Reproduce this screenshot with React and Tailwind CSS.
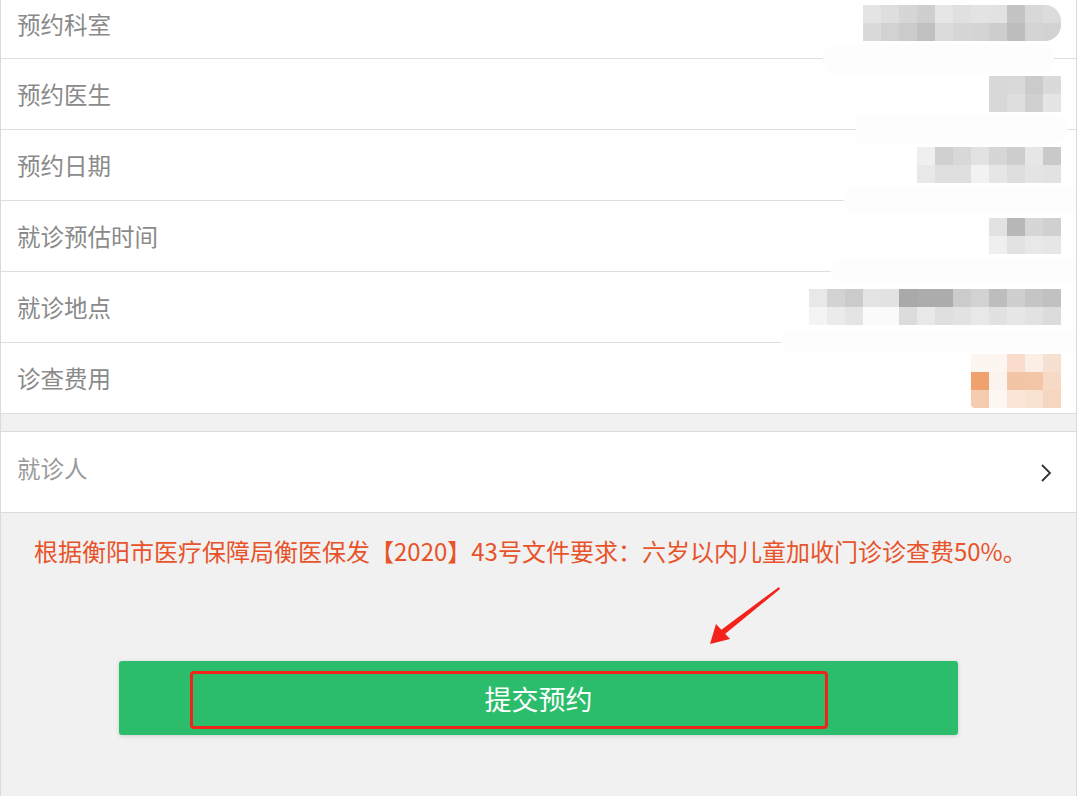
import React from "react";

const FONT = { fontFamily: '"Noto Sans CJK SC", "Noto Sans", sans-serif' };

function Mosaic({ rows, className = "" }) {
  return (
    <div className={"flex flex-col overflow-hidden " + className}>
      {rows.map((r, i) => (
        <div key={i} className="flex">
          {r.map((c, j) => (
            <div key={j} className="w-[18px] h-[18px]" style={{ backgroundColor: c }} />
          ))}
        </div>
      ))}
    </div>
  );
}

const rowsData = [
  {
    label: "预约科室",
    first: true,
    mosaic: [
      ["#e4e4e4", "#dedede", "#d6d6d6", "#cfcfcf", "#e6e6e6", "#e0e0e0", "#e3e3e3", "#e2e2e2", "#c4c4c4", "#d8d8d8", "#dcdcdc"],
      ["#dadada", "#d2d2d2", "#cbcbcb", "#c0c0c0", "#dbdbdb", "#d6d6d6", "#d4d4d4", "#cdcdcd", "#bdbdbd", "#d4d4d4", "#d2d2d2"],
    ],
  },
  {
    label: "预约医生",
    mosaic: [
      ["#d8d8d8", "#d9d9d9", "#cbcbcb", "#dadada"],
      ["#d8d8d8", "#dedede", "#d0d0d0", "#e5e5e5"],
    ],
  },
  {
    label: "预约日期",
    mosaic: [
      ["#efefef", "#d0d0d0", "#d8d8d8", "#e2e2e2", "#d6d6d6", "#cdcdcd", "#e6e6e6", "#c9c9c9"],
      ["#e8e8e8", "#dfdfdf", "#dfdfdf", "#f2f2f2", "#e6e6e6", "#dedede", "#e4e4e4", "#e2e2e2"],
    ],
  },
  {
    label: "就诊预估时间",
    mosaic: [
      ["#e2e2e2", "#b7b7b7", "#d6d6d6", "#d0d0d0"],
      ["#efefef", "#e2e2e2", "#e8e8e8", "#e6e6e6"],
    ],
  },
  {
    label: "就诊地点",
    mosaic: [
      ["#e8e8e8", "#d3d3d3", "#cbcbcb", "#e4e4e4", "#e2e2e2", "#a9a9a9", "#acacac", "#acacac", "#cbcbcb", "#d2d2d2", "#bdbdbd", "#cfcfcf", "#c5c5c5", "#c1c1c1"],
      ["#f4f4f4", "#ebebeb", "#e4e4e4", "#fbfbfb", "#fafafa", "#dcdcdc", "#e8e8e8", "#dfdfdf", "#e2e2e2", "#e8e8e8", "#e1e1e1", "#e6e6e6", "#e2e2e2", "#dcdcdc"],
    ],
  },
  {
    label: "诊查费用",
    mosaic: [
      ["#fdf5ef", "#fdf6f0", "#f9dccb", "#fbeee5", "#f6e0d1"],
      ["#efa26e", "#fbf3ee", "#f3c5a7", "#f3c6a8", "#f7dac5"],
      ["#f5ccb0", "#fdf7f3", "#fbe5d6", "#f9e2d2", "#f6d6c0"],
    ],
    orange: true,
  },
];

export default function App() {
  return (
    <div
      className="relative w-full h-[796px] overflow-hidden bg-[#f1f1f1] border-x border-[#dadada]"
      style={FONT}
    >
      {/* info list */}
      <div className="bg-white">
        {rowsData.map((r, i) => (
          <div
            key={i}
            className={
              "flex justify-between border-b border-[#dedede] pl-[16px] pr-[15px] " +
              (r.first ? "h-[59px] items-start" : "h-[71px] items-center")
            }
          >
            <span
              className={
                "text-[23.5px] text-[#8a8a8a] leading-[34px] " + (r.first ? "mt-[7px]" : "")
              }
            >
              {r.label}
            </span>
            <Mosaic
              rows={r.mosaic}
              className={
                (r.first ? "mt-[5px] rounded-r-[16px] " : "") +
                (r.orange ? "mt-[5px] rounded-bl-[4px] " : "")
              }
            />
          </div>
        ))}
      </div>

      {/* gap */}
      <div className="h-[17px]" />

      {/* patient row */}
      <div className="flex h-[82px] items-center justify-between bg-white border-y border-[#dcdcdc] pl-[16px] pr-[24px]">
        <span className="text-[23.5px] text-[#9a9a9a] leading-[34px] mb-[8px]">就诊人</span>
        <svg width="12" height="20" viewBox="0 0 12 20" className="mt-[2px]">
          <polyline points="2,2 10,10 2,18" fill="none" stroke="#333" strokeWidth="1.8" />
        </svg>
      </div>

      {/* notice */}
      <p className="pl-[33px] pt-[20px] text-[24px] leading-[36px] text-[#e8532a] whitespace-nowrap">
        根据衡阳市医疗保障局衡医保发【2020】43号文件要求：六岁以内儿童加收门诊诊查费50%。
      </p>

      {/* button */}
      <div className="mx-[118px] mt-[92px]">
        <div className="relative flex h-[74px] items-center justify-center rounded-[3px] bg-[#2bbd6b] shadow-[0_1px_4px_rgba(0,0,0,0.15)]">
          <span className="text-[27px] text-white leading-none">提交预约</span>
          <div className="absolute left-[71px] top-[10px] h-[58px] w-[638px] rounded-[4px] border-[3px] border-[#f2231b]" />
        </div>
      </div>

      {/* faint retouch smudges over separators */}
      <div className="absolute left-[822px] top-[44px] h-[30px] w-[231px] rounded-[14px] bg-[#fdfdfd]" />
      <div className="absolute left-[855px] top-[115px] h-[28px] w-[212px] rounded-r-[20px] bg-[#fdfdfd]" />
      <div className="absolute left-[843px] top-[186px] h-[28px] w-[234px] rounded-l-[14px] bg-[#fdfdfd]" />
      <div className="absolute left-[830px] top-[258px] h-[26px] w-[247px] rounded-l-[14px] bg-[#fdfdfd]" />
      <div className="absolute left-[780px] top-[330px] h-[22px] w-[297px] rounded-l-[12px] bg-[#fdfdfd]" />

      {/* annotation arrow */}
      <svg
        className="absolute left-[700px] top-[580px]"
        width="90"
        height="72"
        viewBox="0 0 90 72"
      >
        <polygon points="78,7 79,9 24,54 20,50" fill="#f2231b" />
        <polygon points="9,64 15,44 29,59" fill="#f2231b" />
      </svg>
    </div>
  );
}
